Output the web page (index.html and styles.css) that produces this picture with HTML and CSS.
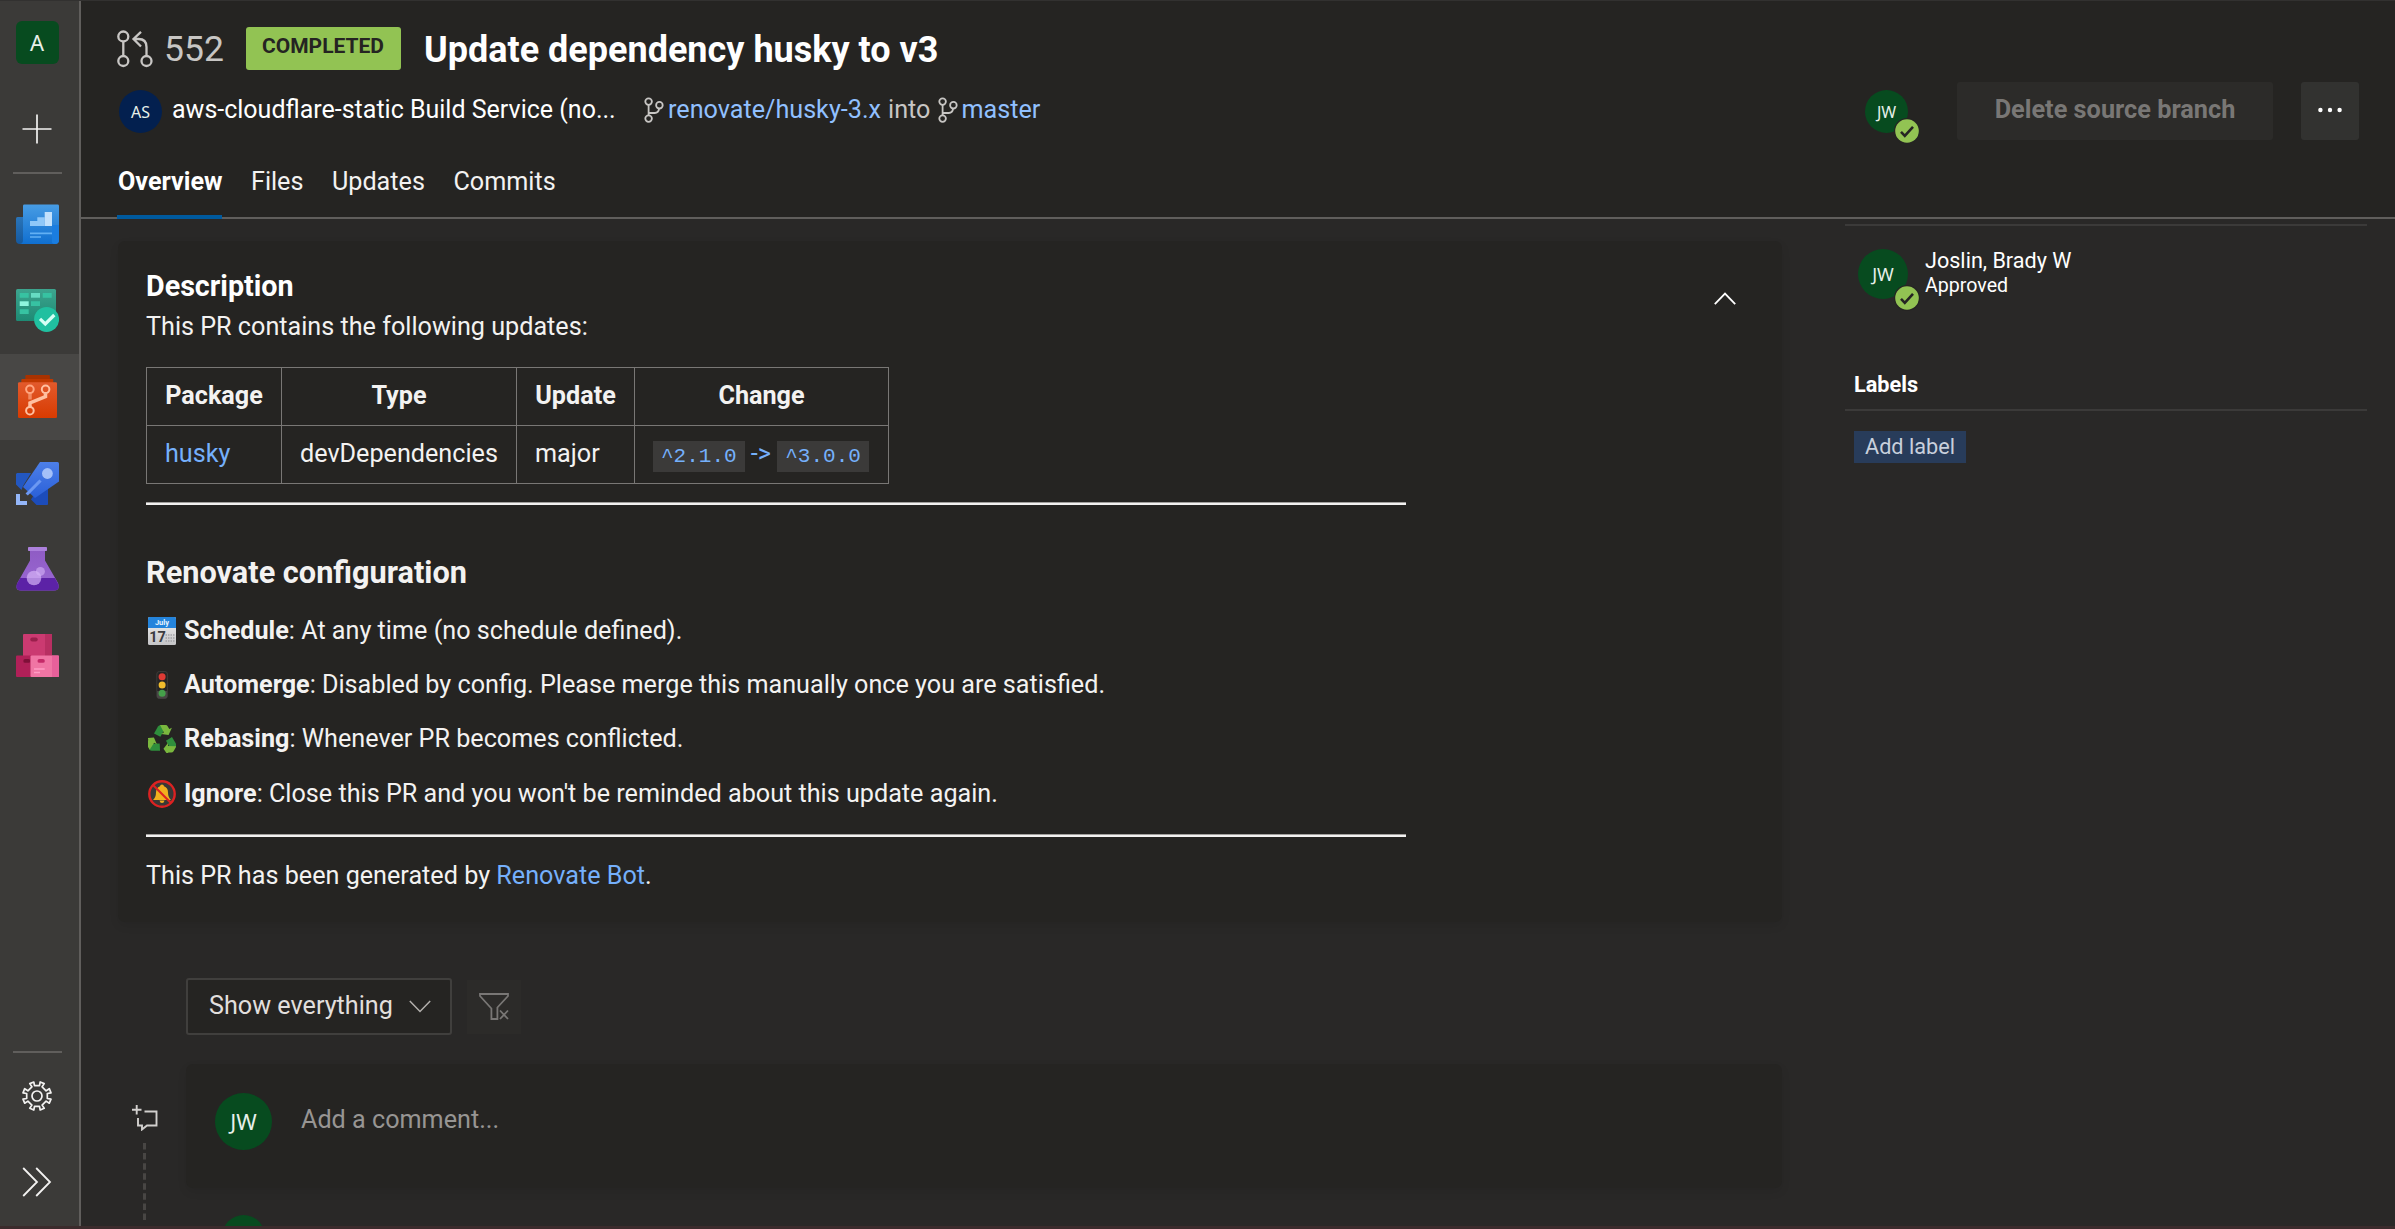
FILE: index.html
```html
<!DOCTYPE html>
<html lang="en">
<head>
<meta charset="utf-8">
<title>Pull request 552: Update dependency husky to v3</title>
<link rel="stylesheet" href="styles.css">
</head>
<body>
<svg class="defs" width="0" height="0" aria-hidden="true">
  <defs>
    <linearGradient id="blueFront" x2="0" y2="1"><stop stop-color="#479ce4"/><stop offset="1" stop-color="#106fd0"/></linearGradient>
    <linearGradient id="blueBack" x2="0" y2="1"><stop stop-color="#2a74b8"/><stop offset="1" stop-color="#15599f"/></linearGradient>
    <linearGradient id="green" x2="0" y2="1"><stop stop-color="#3da48e"/><stop offset="1" stop-color="#1e8a74"/></linearGradient>
    <linearGradient id="orange" x2="0" y2="1"><stop stop-color="#e25a2c"/><stop offset="1" stop-color="#d83b01"/></linearGradient>
    <linearGradient id="rocket" x2="0" y2="1"><stop stop-color="#4d7fe8"/><stop offset="1" stop-color="#2a60d8"/></linearGradient>
    <linearGradient id="flask" x2="0" y2="1"><stop stop-color="#8f5cc4"/><stop offset="1" stop-color="#9a68d4"/></linearGradient>
    <linearGradient id="calendar" x2="0" y2="1"><stop stop-color="#f4f4f4"/><stop offset="1" stop-color="#c4c4c6"/></linearGradient>
    <symbol id="branch" viewBox="0 0 20 26">
      <g fill="none" stroke="currentColor" stroke-width="1.8"><circle cx="4.6" cy="4.6" r="3.3"/><circle cx="4.6" cy="21.6" r="3.3"/><circle cx="15.4" cy="8.2" r="3.3"/><path d="M4.6 8v10.4M4.6 16h6.2c2.6 0 4-1.600 4.300-4.600"/></g>
    </symbol>
    <symbol id="approved" viewBox="0 0 26 26">
      <circle cx="13" cy="13" r="13" fill="#252423"/><circle cx="13" cy="13" r="11.800" fill="#92c353"/><path d="M7 13.800l3.800 4L19 8.800" fill="none" stroke="#252423" stroke-width="2.600"/>
    </symbol>
    <g id="recycleArrow"><path d="M6 8.500L10 1.500Q10.900 0 12.700 0L16 5.200l-3.600 6.600z" fill="#2f8f3c"/><path d="M12 0h5.500q1.500 0 2.300 1.400L21.300 4l2.600-1.300-3.300 7.200-7.400-.9 2.700-1.600z" fill="#7ab83e"/></g>
  </defs>
</svg>
<div class="app">
  <nav class="rail">
    <div class="rail-item"><span class="project">A</span></div>
    <div class="rail-item"><svg width="30" height="30" viewBox="0 0 30 30"><path d="M15 .5v29M.5 15h29" stroke="#f3f2f1" stroke-width="1.700"/></svg></div>
    <div class="rail-line"></div>
    <div class="rail-item rail-first"><svg width="43" height="43" viewBox="0 0 43 43">
      <path d="M0 15.500q0-1.500 1.500-1.500H10v27H4q-4 0-4-4z" fill="url(#blueBack)"/>
      <path d="M7 3q0-1.400 1.400-1.400h33.200Q43 1.600 43 3v34q0 4-4 4H3.500Q7 41 7 37z" fill="url(#blueFront)"/>
      <path d="M36 22h7v15q0 4-4 4t-3-4z" fill="#1a7de0"/>
      <path d="M14 18h7.300v-3.700h7.400V23H14z" fill="#90c8f8"/><path d="M28.700 9H36v14h-7.300z" fill="#c2e1fc"/>
      <path d="M14 30.300h22M14 34h11" stroke="#62b0f4" stroke-width="1.700"/></svg></div>
    <div class="rail-item"><svg width="43" height="43" viewBox="0 0 43 43">
      <rect width="40" height="32" rx="1.500" fill="url(#green)"/>
      <path d="M3.700 4h9v4.700h-9zM26.700 4h9v4.700h-9zM15 12.300h9V17h-9zM3.700 20.300h9V25h-9z" fill="#37c2a2"/>
      <path d="M15 4h9v4.700h-9z" fill="#66dcc3"/><path d="M3.700 12.300h9V17h-9z" fill="#8ff5de"/>
      <circle cx="30.600" cy="30.400" r="12.500" fill="#20c0a0"/><path d="M24 29.800l5.300 5.200 9-9" fill="none" stroke="#d6fff5" stroke-width="3.200"/></svg></div>
    <div class="rail-item active"><svg width="43" height="43" viewBox="0 0 43 43">
      <path d="M9.300 5V1q0-1 1-1h22.600q1 0 1 1v4z" fill="#a83200"/><path d="M5.300 9V5q0-1 1-1h30q1 0 1 1v4z" fill="#c03900"/>
      <rect x="2" y="7.300" width="39" height="35.700" rx="1.300" fill="url(#orange)"/>
      <g fill="none" stroke="#ffc0a0"><path d="M14 18.500v6" stroke="#f08a62" stroke-width="3.500"/><path d="M14 32v-4l15.500-6.500v-3" stroke-width="3.500"/><circle cx="13.900" cy="14.300" r="3.800" stroke="#ffa680" stroke-width="2"/><circle cx="29.600" cy="14.300" r="3.800" stroke-width="2"/><circle cx="13.900" cy="35.700" r="3.800" stroke-width="2"/></g></svg></div>
    <div class="rail-item"><svg width="43" height="43" viewBox="0 0 43 43">
      <path d="M1 11h14l-8 13-1.500 4L0 22.500V12z" fill="#2357c0"/><path d="M32 24v18q0 1-1 1H20.500L15 37.500l2-3z" fill="#1c4cba"/>
      <path d="M24 0h17.500Q43 0 43 1.500v18L19 36 7 25z" fill="url(#rocket)"/>
      <path d="M24.500 18.500L10.700 32.500" stroke="#6c98f2" stroke-width="3.200"/><circle cx="31.400" cy="11.500" r="5.400" fill="#a4c0f8"/>
      <path d="M0 32h4v7h7v4H0z" fill="#94b6f8"/></svg></div>
    <div class="rail-item"><svg width="43" height="44" viewBox="0 0 43 44">
      <path d="M14 3h15v10.500l13 22.500q2.500 7.500-4 7.500H5Q-1.500 43.500 1.400 36L14 13.500z" fill="url(#flask)"/>
      <path d="M4.200 31h34.700l3.300 6q2 6.500-4.200 6.500H5Q-1.200 43.500.9 37z" fill="#5c22a6"/>
      <rect x="12" width="19" height="4" rx=".8" fill="#ac80dc"/>
      <circle cx="18" cy="31" r="7.300" fill="#d6b4f6" fill-opacity=".7"/><circle cx="24.400" cy="24.400" r="4.500" fill="#d6b4f6" fill-opacity=".6"/></svg></div>
    <div class="rail-item"><svg width="43" height="43" viewBox="0 0 43 43">
      <rect x="7" width="29" height="24" rx="1" fill="#cb3a71"/><path d="M29 0h6q1 0 1 1v21h-7z" fill="#b82f62"/><rect x="14.300" y="3.600" width="7.400" height="3.800" rx="1.900" fill="#9a1f4c"/>
      <rect y="21.600" width="16" height="21.400" rx="1" fill="#b02058"/><rect x="7.300" y="25" width="7" height="3.800" rx="1.900" fill="#7e1038"/>
      <rect x="14.500" y="21.600" width="28.500" height="21.400" rx="1" fill="#f075a4"/><path d="M36 21.600h6q1 0 1 1V42q0 1-1 1h-6z" fill="#e8609a"/><rect x="21.500" y="25" width="7.300" height="3.800" rx="1.900" fill="#c42a68"/>
      <path d="M18 35h10.700M18 38.500h6" stroke="#ff9cc4" stroke-width="1.700"/></svg></div>
    <div class="rail-space"></div>
    <div class="rail-line"></div>
    <div class="rail-item"><svg width="30" height="30" viewBox="0 0 30 30"><g fill="none" stroke="#f3f2f1" stroke-width="1.700" stroke-linejoin="round"><path d="M12.500 4.700L11.800 1l-4 1.600 2.100 3.200-4 4-3.200-2.100L1 11.800l3.700.7v5L1 18.200l1.700 4 3.200-2.100 4 4-2.100 3.200 4 1.700.7-3.700h5l.7 3.700 4-1.700-2.100-3.200 4-4 3.200 2.100 1.700-4-3.700-.7v-5l3.700-.7-1.700-4.100-3.200 2.100-4-4 2.100-3.200-4-1.600-.7 3.700z"/><circle cx="15" cy="15" r="5"/></g></svg></div>
    <div class="rail-item"><svg width="30" height="30" viewBox="0 0 30 30"><path d="M1.200 1l13.800 14L1.200 29M14.200 1L28 15 14.200 29" fill="none" stroke="#f3f2f1" stroke-width="1.800"/></svg></div>
  </nav>

  <div class="page">
    <header class="header">
      <div class="title-row">
        <svg class="pr-icon" width="36" height="38" viewBox="0 0 36 38"><g fill="none" stroke="currentColor" stroke-width="2.300"><circle cx="6.300" cy="6.500" r="5"/><circle cx="6.300" cy="31" r="5"/><circle cx="29.500" cy="31" r="5"/><path d="M6.300 11.500V26M29.500 26V17q0-8-8-8h-4M24 1.800L16.500 9l7.500 7.500"/></g></svg>
        <span class="pr-id">552</span>
        <span class="status">COMPLETED</span>
        <h1>Update dependency husky to v3</h1>
      </div>
      <div class="meta-row">
        <span class="avatar navy size-m">AS</span>
        <span class="author">aws-cloudflare-static Build Service (no...</span>
        <div class="branches"><svg class="branch" width="20" height="26"><use href="#branch"/></svg><a>renovate/husky-3.x</a><span class="into">into</span><svg class="branch" width="20" height="26"><use href="#branch"/></svg><a>master</a></div>
        <div class="actions">
          <span class="vote"><span class="avatar size-m">JW</span><svg class="tick" width="26" height="26"><use href="#approved"/></svg></span>
          <span class="button disabled">Delete source branch</span>
          <span class="button more"><svg width="24" height="6" viewBox="0 0 24 6" fill="#fff"><circle cx="2.400" cy="3" r="2.200"/><circle cx="12" cy="3" r="2.200"/><circle cx="21.600" cy="3" r="2.200"/></svg></span>
        </div>
      </div>
      <div class="tabs"><span class="tab selected">Overview</span><span class="tab">Files</span><span class="tab">Updates</span><span class="tab">Commits</span></div>
    </header>

    <main class="content">
      <section class="main-column">
        <article class="card description">
          <div class="card-head"><h2>Description</h2><svg width="22" height="13" viewBox="0 0 22 13"><path d="M.8 12.200L11 1.600l10.200 10.600" fill="none" stroke="#fff" stroke-width="1.800"/></svg></div>
          <p>This PR contains the following updates:</p>
          <table>
            <tr><th class="c1">Package</th><th class="c2">Type</th><th class="c3">Update</th><th class="c4">Change</th></tr>
            <tr><td><a>husky</a></td><td>devDependencies</td><td>major</td><td><a><code>^2.1.0</code> -&gt; <code>^3.0.0</code></a></td></tr>
          </table>
          <hr class="first">
          <h3>Renovate configuration</h3>
          <ul>
            <li><svg width="28" height="28" viewBox="0 0 28 28"><rect width="28" height="28" rx="1.500" fill="url(#calendar)"/><path d="M0 11V1.500Q0 0 1.500 0h25Q28 0 28 1.500V11z" fill="#2484dc"/><text x="14" y="8" class="month">July</text><text x="9.500" y="25" class="day">17</text><path d="M17.500 18h9M17.500 21h9M17.500 24h9" stroke="#a2a2a6" stroke-width="1.400" stroke-dasharray="1.500 1"/></svg><span><b>Schedule</b>: At any time (no schedule defined).</span></li>
            <li><svg width="28" height="28" viewBox="0 0 28 28"><rect x="8.800" y=".5" width="10.600" height="27" rx="2.500" fill="#262524" stroke="#3d3b39"/><path d="M9 20h10.200v5.500q0 2-2 2H11q-2 0-2-2z" fill="#484644"/><circle cx="14.100" cy="5.800" r="3.500" fill="#de3a34"/><circle cx="14.100" cy="14" r="3.500" fill="#f0bc2c"/><circle cx="14.100" cy="22.200" r="3.500" fill="#45a04a"/></svg><span><b>Automerge</b>: Disabled by config. Please merge this manually once you are satisfied.</span></li>
            <li><svg width="28" height="28" viewBox="0 0 28 28"><use href="#recycleArrow"/><use href="#recycleArrow" transform="rotate(120 14 15.400)"/><use href="#recycleArrow" transform="rotate(240 14 15.400)"/></svg><span><b>Rebasing</b>: Whenever PR becomes conflicted.</span></li>
            <li><svg width="28" height="28" viewBox="0 0 28 28"><circle cx="14" cy="14" r="12.700" fill="#3a3836" stroke="#dc2222" stroke-width="2.400"/><path d="M14 4.500q1.800 0 2 1.700 4 1.500 4 6.300 0 4.500 3 7.500H5q3-3 3-7.500 0-4.800 4-6.300.2-1.700 2-1.700zM11.500 20.500h5q-.5 2.500-2.500 2.500t-2.500-2.500z" fill="#f2b01e"/><path d="M5 5l18 18" stroke="#dc2222" stroke-width="2.200"/></svg><span><b>Ignore</b>: Close this PR and you won't be reminded about this update again.</span></li>
          </ul>
          <hr class="second">
          <p class="footer">This PR has been generated by <a>Renovate Bot</a>.</p>
        </article>

        <div class="filters">
          <span class="dropdown">Show everything<svg width="22" height="13" viewBox="0 0 22 13"><path d="M.8 1L11 11.500 21.200 1" fill="none" stroke="#b3b0ad" stroke-width="1.500"/></svg></span>
          <span class="clear"><svg width="30" height="27" viewBox="0 0 30 27" fill="none" stroke="#797775" stroke-width="1.800"><path d="M18.400 17.500V26h-6V15.500L1 3V1h28v2L18.400 14.500V19M21 17.500l8 8.500M29 17.500L21 26"/></svg></span>
        </div>

        <div class="comment-row">
          <div class="timeline">
            <svg width="26" height="26" viewBox="0 0 26 26" fill="none" stroke="#d2d0ce" stroke-width="1.900"><path d="M4.700 0v9.500M0 4.800h9.500M12.500 6.500h12v14H15l-5 4v-4H6V13"/></svg>
            <svg class="dashes" width="3" height="78" viewBox="0 0 3 78"><path d="M1.500 0v78" stroke="#484644" stroke-width="3" stroke-dasharray="6.500 3.570"/></svg>
          </div>
          <div class="thread">
            <div class="card comment"><span class="avatar size-l">JW</span><span>Add a comment...</span></div>
            <span class="avatar size-m next"></span>
          </div>
        </div>
      </section>

      <aside class="side">
        <div class="reviewer">
          <span class="vote"><span class="avatar size-n">JW</span><svg class="tick" width="26" height="26"><use href="#approved"/></svg></span>
          <div><div class="name">Joslin, Brady W</div><div class="state">Approved</div></div>
        </div>
        <h4>Labels</h4>
        <span class="add-label">Add label</span>
      </aside>
    </main>
  </div>
</div>
<div class="bottom-edge"></div>
</body>
</html>
```
FILE: styles.css
```css
* { box-sizing: border-box; }

body {
  margin: 0;
  height: 1229px;
  display: flex;
  flex-direction: column;
  overflow: hidden;
  background: #292827;
  color: #f3f2f1;
  font: 25.180px/40px Roboto, "Liberation Sans", sans-serif;
}

h1, h2, h3, h4, p, ul { margin: 0; padding: 0; font-weight: 700; }
p { font-weight: 400; }
a { color: #75b0fb; }
svg { display: block; flex: none; }
.defs { position: absolute; }

.app { display: flex; height: 1226px; overflow: hidden; border-top: 1px solid #323130; }
.bottom-edge { height: 3px; background: #3b2b2c; }

/* Navigation rail */
.rail {
  display: flex;
  flex-direction: column;
  width: 81px;
  flex: none;
  padding-bottom: 1px;
  background: #3b3a38;
  border-right: 2px solid #605e5c;
}
.rail-item {
  display: flex;
  align-items: center;
  justify-content: center;
  height: 86.25px;
  flex: none;
  padding-right: 5px;
}
.rail-item:first-child { height: 84.5px; padding-bottom: 2px; }
.rail-first { margin-top: 7.500px; }
.rail-item.active { background: #484745; }
.rail-line { height: 2px; flex: none; margin: 0 17px 0 13px; background: #605e5c; }
.rail-space { flex: 1; }
.project {
  width: 43px;
  height: 43px;
  border-radius: 6px;
  background: #074b1f;
  color: #e8f0ea;
  font: 22px/43px "Noto Sans", sans-serif;
  text-align: center;
}

/* Page header */
.page { display: flex; flex-direction: column; flex: 1; min-width: 0; }
.header {
  height: 218px;
  flex: none;
  padding: 20px 36px 0;
  background: #252422;
  border-bottom: 2px solid #605e5c;
}
.title-row { display: flex; align-items: center; height: 55px; }
.pr-icon { color: #c8c6c4; margin: 0 11px 0 0; }
.pr-id { width: 82px; margin-top: 1px; color: #c8c6c4; font-size: 35.500px; }
.status {
  width: 155px;
  height: 43px;
  border-radius: 3px;
  background: #92c353;
  color: #252422;
  font-size: 21px;
  font-weight: 700;
  line-height: 39px;
  padding-right: 1px;
  text-align: center;
}
.title-row h1 { margin: 3px 0 0 23px; color: #fff; font-size: 36px; }

.meta-row { display: flex; align-items: center; height: 58px; margin-top: 6px; padding-left: 2px; }
.avatar {
  display: block;
  flex: none;
  border-radius: 50%;
  background: #074b1f;
  color: #e8f0ea;
  font-family: "Noto Sans", sans-serif;
  text-align: center;
}
.navy { background: #03204f; }
.size-m { width: 43px; height: 43px; font-size: 16px; line-height: 44px; }
.size-n { width: 50px; height: 50px; font-size: 18px; line-height: 51px; }
.size-l { width: 57px; height: 57px; font-size: 22px; line-height: 57px; }
.author { width: 482px; padding: 0 0 2px 10px; color: #fff; font-size: 25px; white-space: nowrap; }
.branches { display: flex; align-items: center; padding-bottom: 2px; color: #c8c6c4; }
.branches a { margin-left: 4px; color: #91c0ff; }
.branches a:last-child { margin-left: 3px; }
.into { margin: 0 8px 0 7px; }
.actions { display: flex; align-items: center; margin-left: auto; }
.vote { position: relative; }
.tick { position: absolute; right: -12px; bottom: -11px; }
.button {
  display: flex;
  align-items: center;
  justify-content: center;
  height: 58px;
  border-radius: 3px;
}
.disabled { width: 316px; margin: 0 28px 0 49px; padding-bottom: 2px; background: #2c2b29; color: #797775; font-size: 25.300px; font-weight: 700; }
.more { width: 58px; padding-bottom: 2px; background: #323230; }

.tabs { display: flex; gap: 28.500px; height: 79px; padding-left: 1px; }
.tab { height: 79px; padding-top: 6px; line-height: 71px; }
.selected { position: relative; color: #fff; font-weight: 700; }
.selected::after { content: ""; position: absolute; left: -1px; right: 0; bottom: 0; height: 4px; background: #005a9e; }

/* Page body */
.content { display: flex; flex: 1; min-height: 0; overflow: hidden; padding: 0 28px 0 37px; }
.main-column { width: 1664px; flex: none; padding-top: 22px; }
.card {
  background: #252422;
  border-radius: 7px;
  box-shadow: 0 4px 10px rgba(0, 0, 0, .08);
}
.description { height: 681px; padding: 26px 29px 0 28px; }
.card-head { display: flex; align-items: center; justify-content: space-between; padding-right: 17px; }
.card-head svg { margin-top: 22px; }
.card-head, .card-head h2 { height: 40px; color: #fff; font-size: 28.700px; }
.card-head h2 { line-height: 38px; }
.description table { margin-top: 20px; border-collapse: collapse; table-layout: fixed; width: 743px; }
th, td { height: 58px; padding: 0 18px 1px; border: 1px solid #797775; text-align: left; white-space: nowrap; }
th { padding: 0 0 1px; text-align: center; }
.c1 { width: 135px; }
.c2 { width: 235px; }
.c3 { width: 118px; }
code {
  display: inline-block;
  height: 31px;
  padding: 0 8px;
  background: #3b3a39;
  font: 21px/31px "Liberation Mono", monospace;
}
hr { width: 1260px; height: 3px; margin: 0; border: 0; border-top: 1px solid #a19f9d; background: #f3f2f1; }
hr.first { margin-top: 18px; }
.description h3 { margin-top: 48px; font-size: 30.700px; }
.description ul { margin-top: 11px; list-style: none; font-weight: 400; }
.description li { display: flex; align-items: center; gap: 8px; height: 54.200px; padding-left: 2px; }
.month { fill: #e6f2ff; font: 700 7.500px Roboto, sans-serif; text-anchor: middle; }
.day { fill: #3c3c3e; font: 700 14.500px Roboto, sans-serif; text-anchor: middle; }
hr.second { margin-top: 13px; }
.footer { margin-top: 19.500px; }

.filters { display: flex; align-items: center; gap: 15px; margin: 56px 0 29px 68px; height: 57px; }
.dropdown {
  display: flex;
  align-items: center;
  justify-content: space-between;
  width: 266px;
  height: 57px;
  padding: 0 19px 1px 21px;
  border: 2px solid #403f3d;
  border-radius: 3px;
  background: #252422;
  color: #e1dfdd;
}
.clear { display: flex; align-items: center; justify-content: center; width: 54px; height: 54px; background: #2c2b29; }

.comment-row { display: flex; }
.timeline { display: flex; flex-direction: column; width: 68px; padding: 41px 0 0 14px; }
.dashes { margin: 12px 0 0 11px; }
.thread { flex: 1; }
.comment { display: flex; height: 124px; padding: 29px 29px 0; gap: 29px; color: #979593; line-height: 54px; }
.next { margin: 27px 0 0 36px; }

/* Reviewer and label panel */
.side { width: 522px; margin-left: 63px; padding-top: 5px; }
.reviewer { display: flex; height: 156px; padding: 23px 0 0 13px; border-top: 2px solid #3b3a39; }
.side .vote { height: 50px; margin-right: 17px; }
.side .tick { right: -12px; bottom: -12px; }
.name, .state { color: #fff; font-size: 21.600px; line-height: 24px; }
.state { font-size: 19.600px; line-height: 25px; }
.side h4 { height: 31px; padding-left: 9px; border-bottom: 2px solid #3b3a39; color: #fff; font-size: 21.700px; line-height: 10px; }
.add-label {
  display: block;
  width: 112px;
  height: 32px;
  margin: 20px 0 0 9px;
  background: #283c5a;
  color: #c8d0dc;
  font-size: 21.700px;
  line-height: 31px;
  text-align: center;
}
```
